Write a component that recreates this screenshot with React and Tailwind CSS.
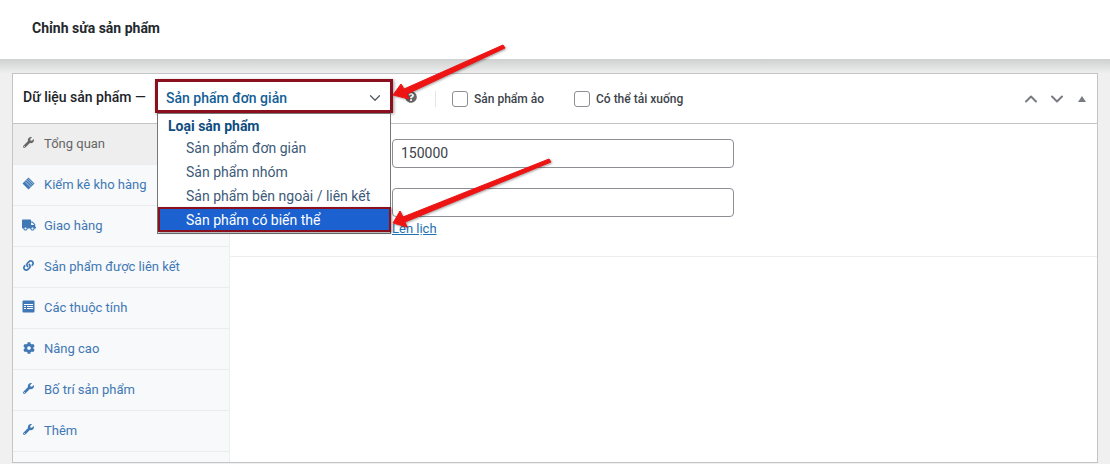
import React from "react";
import { ChevronDown, ChevronUp } from "lucide-react";
import { FaWrench, FaTruck, FaLink, FaCog, FaQuestionCircle } from "react-icons/fa";

const InventoryIcon = () => (
  <svg width="13" height="13" viewBox="0 0 13 13" className="text-[#3f78b5]">
    <path d="M6.5 0.5 12.5 6.5 6.5 12.5 0.5 6.5Z" fill="currentColor" />
    <path d="M4.5 3 10 8.5M3 4.5l5.5 5.5M6 1.8l5.2 5.2" stroke="#dce8f4" strokeWidth="0.7" />
  </svg>
);

const TableIcon = () => (
  <svg width="13" height="13" viewBox="0 0 13 13" className="text-[#3f78b5]">
    <rect width="12" height="12" x="0.5" y="0.5" rx="1" fill="currentColor" />
    <path d="M2 4h9v1H2zM2 6h2v1H2zM5 6h6v1H5zM2 8h2v1H2zM5 8h6v1H5z" fill="#fff" />
  </svg>
);

const tabs = [
  { label: "Tổng quan", icon: <FaWrench size={11} />, active: true },
  { label: "Kiểm kê kho hàng", icon: <InventoryIcon /> },
  { label: "Giao hàng", icon: <FaTruck size={14} /> },
  { label: "Sản phẩm được liên kết", icon: <FaLink size={11} /> },
  { label: "Các thuộc tính", icon: <TableIcon /> },
  { label: "Nâng cao", icon: <FaCog size={12} /> },
  { label: "Bố trí sản phẩm", icon: <FaWrench size={11} /> },
  { label: "Thêm", icon: <FaWrench size={11} /> },
];

const options = ["Sản phẩm đơn giản", "Sản phẩm nhóm", "Sản phẩm bên ngoài / liên kết"];

const Check = ({ label, className }) => (
  <div className={`flex items-center gap-[6px] ${className}`}>
    <span className="h-4 w-4 rounded-[3px] border border-[#8c8f94] bg-white" />
    <span className="text-[12px] font-medium text-[#3c434a]">{label}</span>
  </div>
);

const Arrows = () => (
  <svg
    width="1110"
    height="464"
    viewBox="0 0 1110 464"
    className="pointer-events-none absolute left-0 top-0"
  >
    <g fill="#ee1414" stroke="#ee1414" strokeLinejoin="round" strokeWidth="1" style={{ filter: "drop-shadow(1px 1px 1px rgba(0,0,0,.35))" }}>
      <path d="M393 95 401 84 404 89 503 45 505 48 407 94 409 99Z" />
      <path d="M393 223 400 211 403 217 549 159 551 162 405 222 407 227Z" />
    </g>
  </svg>
);

export default function App() {
  return (
    <div
      className="relative h-[464px] w-[1110px] overflow-hidden bg-[#f0f0f1] text-[14px]"
      style={{ fontFamily: "Roboto, 'Noto Sans', sans-serif" }}
    >
      <div className="flex h-[59px] items-center bg-white pb-[3px] pl-8">
        <h1 className="text-[14px] font-bold text-[#23282d]">Chỉnh sửa sản phẩm</h1>
      </div>

      <div className="h-[405px] bg-[linear-gradient(#cfd0d0,#f0f0f1_15px)] pl-3 pr-3 pt-[14px]">
        <div className="flex h-[390px] flex-col border border-[#c3c4c7] bg-white">
          <div className="flex h-[50px] shrink-0 items-center border-b border-[#c3c4c7] pl-[10px]">
            <span className="mb-[2px] w-[132px] text-[14px] font-medium text-[#1d2327]">Dữ liệu sản phẩm —</span>

            <div className="relative mb-[5px] h-[34px] w-[238px] border-[3px] border-[#8c0f1e] bg-white shadow-[1px_1px_3px_rgba(0,0,0,0.4)]">
              <div className="flex h-full items-center justify-between pl-2 pr-[6px] pt-1">
                <span className="text-[14px] font-medium text-[#135e96]">Sản phẩm đơn giản</span>
                <ChevronDown size={18} strokeWidth={1.6} className="text-[#50575e]" />
              </div>

              <div className="absolute left-[-1px] top-[31px] z-10 h-[121px] w-[234px] border border-[#767676] bg-white text-[14px] text-[#3c5a78]">
                <div className="pl-[10px] pt-[3px] text-[14px] font-bold leading-[19px] text-[#0f4d80]">Loại sản phẩm</div>
                {options.map((option) => (
                  <div key={option} className="h-6 pl-7 leading-[24px]">
                    {option}
                  </div>
                ))}
                <div className="-mr-px -mt-px h-[25px] border-[2px] border-[#8c0f1e] bg-[#1b62d0] pl-[26px] leading-[23px] text-white shadow-[1px_1px_2px_rgba(0,0,0,0.4)]">
                  Sản phẩm có biến thể
                </div>
              </div>
            </div>

            <FaQuestionCircle size={12} className="mb-1 ml-3 text-[#666]" />
            <span className="ml-[18px] h-4 w-px bg-[#e2e4e7]" />
            <Check label="Sản phẩm ảo" className="ml-4" />
            <Check label="Có thể tải xuống" className="ml-[30px]" />

            <div className="ml-auto flex items-center text-[#787c82]">
              <ChevronUp size={20} strokeWidth={2.4} />
              <ChevronDown size={20} strokeWidth={2.4} className="ml-[6px]" />
              <span className="ml-[11px] mr-[11px] h-0 w-0 border-x-[4px] border-b-[6px] border-x-transparent border-b-[#787c82]" />
            </div>
          </div>

          <div className="flex min-h-0 flex-1">
            <div className="w-[217px] shrink-0 border-r border-[#eee] bg-[#f8f9fa]">
              {tabs.map((tab) => (
                <div
                  key={tab.label}
                  className={`flex h-[41px] items-center border-b border-[#eaecee] ${
                    tab.active ? "bg-[#eee] text-[#666]" : "text-[#3f78b5]"
                  }`}
                >
                  <span className="mb-[3px] flex w-[31px] shrink-0 justify-center">{tab.icon}</span>
                  <span className="text-[13px]">{tab.label}</span>
                </div>
              ))}
            </div>

            <div className="flex-1">
              <div className="h-[133px] border-b border-[#eee] pl-[162px] pt-[15px]">
                <div className="flex h-[29px] w-[342px] items-center rounded-[4px] border border-[#8c8f94] bg-white pl-2 text-[14px] text-[#3c434a]">
                  150000
                </div>
                <div className="mt-5 h-[29px] w-[342px] rounded-[4px] border border-[#8c8f94] bg-white" />
                <a className="mt-[4px] block text-[13px] leading-[16px] text-[#2271b1] underline">Lên lịch</a>
              </div>
            </div>
          </div>
        </div>
      </div>

      <Arrows />
    </div>
  );
}
